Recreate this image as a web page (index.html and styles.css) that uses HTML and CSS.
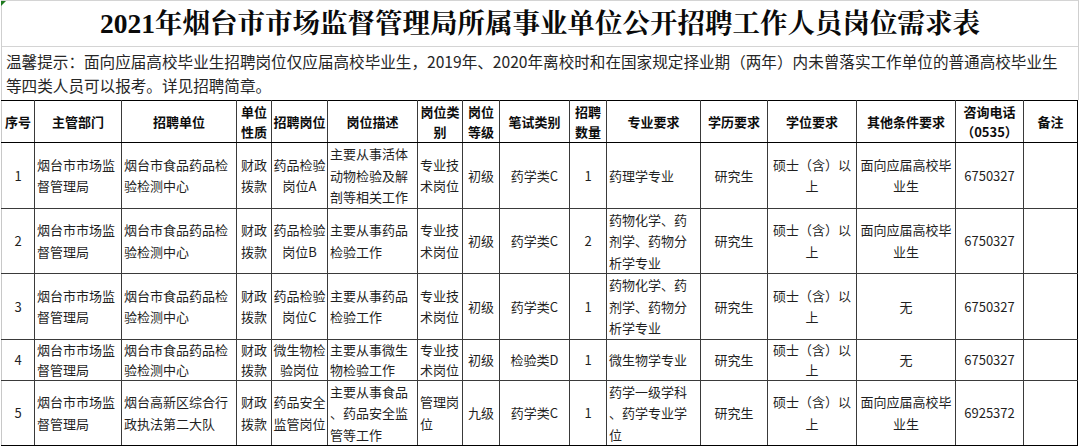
FILE: index.html
```html
<!DOCTYPE html>
<html lang="zh-CN">
<head>
<meta charset="utf-8">
<title>2021年烟台市市场监督管理局所属事业单位公开招聘工作人员岗位需求表</title>
<link rel="stylesheet" href="styles.css">
</head>
<body>
<div class="sheet">
  <span class="flag"></span>
  <div class="top">
    <div class="title">2021年烟台市市场监督管理局所属事业单位公开招聘工作人员岗位需求表</div>
    <div class="hint">温馨提示：面向应届高校毕业生招聘岗位仅应届高校毕业生，2019年、2020年离校时和在国家规定择业期（两年）内未曾落实工作单位的普通高校毕业生<br>等四类人员可以报考。详见招聘简章。</div>
  </div>
  <table class="grid">
    <colgroup>
      <col class="c-no"><col class="c-dept"><col class="c-unit"><col class="c-type"><col class="c-post">
      <col class="c-desc"><col class="c-cat"><col class="c-lvl"><col class="c-exam"><col class="c-num">
      <col class="c-major"><col class="c-edu"><col class="c-deg"><col class="c-other"><col class="c-tel"><col class="c-note">
    </colgroup>
    <thead>
      <tr class="head">
        <th class="first">序号</th><th>主管部门</th><th>招聘单位</th><th>单位<br>性质</th><th>招聘岗位</th>
        <th>岗位描述</th><th>岗位类<br>别</th><th>岗位<br>等级</th><th>笔试类别</th><th>招聘<br>数量</th>
        <th>专业要求</th><th>学历要求</th><th>学位要求</th><th>其他条件要求</th><th>咨询电话<br>（0535）</th><th class="last">备注</th>
      </tr>
    </thead>
    <tbody>
      <tr class="row">
        <td class="first">1</td><td class="l">烟台市市场监<br>督管理局</td><td class="l">烟台市食品药品检<br>验检测中心</td><td>财政<br>拨款</td><td>药品检验<br>岗位A</td>
        <td class="l">主要从事活体<br>动物检验及解<br>剖等相关工作</td><td class="l">专业技<br>术岗位</td><td>初级</td><td>药学类C</td><td>1</td>
        <td class="l">药理学专业</td><td>研究生</td><td>硕士（含）以<br>上</td><td>面向应届高校毕<br>业生</td><td>6750327</td><td class="last"></td>
      </tr>
      <tr class="row">
        <td class="first">2</td><td class="l">烟台市市场监<br>督管理局</td><td class="l">烟台市食品药品检<br>验检测中心</td><td>财政<br>拨款</td><td>药品检验<br>岗位B</td>
        <td class="l">主要从事药品<br>检验工作</td><td class="l">专业技<br>术岗位</td><td>初级</td><td>药学类C</td><td>2</td>
        <td class="l">药物化学、药<br>剂学、药物分<br>析学专业</td><td>研究生</td><td>硕士（含）以<br>上</td><td>面向应届高校毕<br>业生</td><td>6750327</td><td class="last"></td>
      </tr>
      <tr class="row">
        <td class="first">3</td><td class="l">烟台市市场监<br>督管理局</td><td class="l">烟台市食品药品检<br>验检测中心</td><td>财政<br>拨款</td><td>药品检验<br>岗位C</td>
        <td class="l">主要从事药品<br>检验工作</td><td class="l">专业技<br>术岗位</td><td>初级</td><td>药学类C</td><td>1</td>
        <td class="l">药物化学、药<br>剂学、药物分<br>析学专业</td><td>研究生</td><td>硕士（含）以<br>上</td><td>无</td><td>6750327</td><td class="last"></td>
      </tr>
      <tr class="row short">
        <td class="first">4</td><td class="l">烟台市市场监<br>督管理局</td><td class="l">烟台市食品药品检<br>验检测中心</td><td>财政<br>拨款</td><td>微生物检<br>验岗位</td>
        <td class="l">主要从事微生<br>物检验工作</td><td class="l">专业技<br>术岗位</td><td>初级</td><td>检验类D</td><td>1</td>
        <td class="l">微生物学专业</td><td>研究生</td><td>硕士（含）以<br>上</td><td>无</td><td>6750327</td><td class="last"></td>
      </tr>
      <tr class="row">
        <td class="first">5</td><td class="l">烟台市市场监<br>督管理局</td><td class="l">烟台高新区综合行<br>政执法第二大队</td><td>财政<br>拨款</td><td>药品安全<br>监管岗位</td>
        <td class="l">主要从事食品<br>、药品安全监<br>管等工作</td><td class="l">管理岗<br>位</td><td>九级</td><td>药学类C</td><td>1</td>
        <td class="l">药学一级学科<br>、药学专业学<br>位</td><td>研究生</td><td>硕士（含）以<br>上</td><td>面向应届高校毕<br>业生</td><td>6925372</td><td class="last"></td>
      </tr>
    </tbody>
  </table>
</div>
</body>
</html>
```
FILE: styles.css
```css
html, body {
  margin: 0;
  padding: 0;
  background: #ffffff;
}

body {
  font-family: "Noto Sans CJK SC", "Noto Sans", sans-serif;
  color: #222;
}

.sheet {
  position: relative;
  width: 1080px;
  height: 448px;
  overflow: hidden;
  background: #ffffff;
}

.flag {
  position: absolute;
  left: 1px;
  top: 1px;
  width: 0;
  height: 0;
  border-top: 5px solid #1f7a1f;
  border-right: 5px solid transparent;
}

.top {
  margin-left: 1px;
  width: 1076px;
  border-top: 1px solid #d4d4d4;
  border-left: 1px solid #cfcfcf;
  border-right: 1px solid #cfcfcf;
}

.title {
  height: 45px;
  line-height: 45px;
  text-align: center;
  font-family: "Liberation Serif", "Noto Serif CJK SC", "Noto Sans CJK SC", serif;
  font-weight: bold;
  font-size: 27.5px;
  color: #0a0a0a;
  border-bottom: 1px solid #d4d4d4;
  white-space: nowrap;
}

.hint {
  height: 53px;
  box-sizing: border-box;
  padding: 2px 0 0 4px;
  font-size: 15.6px;
  line-height: 24px;
  color: #262626;
  white-space: nowrap;
}

.grid {
  margin-left: 1px;
  border-collapse: collapse;
  table-layout: fixed;
  width: 1077px;
  font-size: 13px;
}

.c-no { width: 33px; }
.c-dept { width: 87px; }
.c-unit { width: 115px; }
.c-type { width: 35px; }
.c-post { width: 56px; }
.c-desc { width: 90px; }
.c-cat { width: 45px; }
.c-lvl { width: 37px; }
.c-exam { width: 70px; }
.c-num { width: 37px; }
.c-major { width: 94px; }
.c-edu { width: 67px; }
.c-deg { width: 89px; }
.c-other { width: 99px; }
.c-tel { width: 68px; }
.c-note { width: 54px; }

.grid th,
.grid td {
  border: 1px solid #3a3a3a;
  padding: 0 1px;
  text-align: center;
  vertical-align: middle;
  white-space: nowrap;
  overflow: hidden;
}

.grid th {
  font-weight: bold;
  color: #0d0d0d;
  line-height: 20px;
  border-top-color: #000;
  border-bottom-color: #000;
}

.head {
  height: 42px;
}

.grid td {
  line-height: 21.5px;
  color: #1f1f1f;
}

.row {
  height: 64px;
}

.row.short {
  height: 40px;
}

.row.short td {
  line-height: 20px;
}

.grid td.l {
  text-align: left;
  padding-left: 2px;
}

.grid .first {
  border-left-color: #c8c8c8;
}

.grid .last {
  border-right-color: #000;
}

.grid tbody tr:last-child td {
  border-bottom-color: #000;
}
```
